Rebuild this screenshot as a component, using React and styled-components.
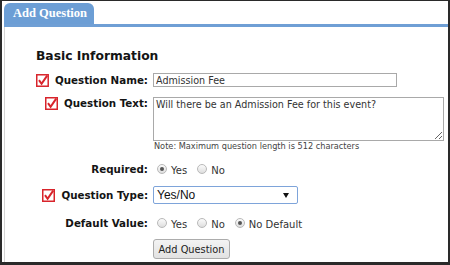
import React from 'react'
import styled, { createGlobalStyle } from 'styled-components'

const GlobalStyle = createGlobalStyle`
  html, body {
    margin: 0;
    padding: 0;
    background: #fff;
  }
  * {
    box-sizing: border-box;
  }
`

const Frame = styled.div`
  width: 450px;
  height: 265px;
  border-style: solid;
  border-color: #2a2a2a;
  border-width: 1px 2px 3px 2px;
  padding: 2px 0 0 2px;
  display: flex;
  flex-direction: column;
  overflow: hidden;
`

const TabBar = styled.div`
  display: flex;
  border-bottom: 3px solid #6f9fd5;
`

const Tab = styled.div`
  width: 90px;
  height: 21px;
  line-height: 21px;
  padding-left: 9px;
  background: #6c9ed5;
  border-radius: 6px 6px 0 0;
  color: #fff;
  font-family: 'Liberation Serif', serif;
  font-weight: bold;
  font-size: 12.5px;
`

const Panel = styled.div`
  flex: 1;
  border-left: 1px solid #d4d4d4;
  padding: 22px 0 0 31px;
`

const Heading = styled.div`
  font-family: 'DejaVu Sans', Verdana, sans-serif;
  font-weight: bold;
  font-size: 12.3px;
  line-height: 15px;
  color: #141414;
`

const Row = styled.div`
  display: grid;
  grid-template-columns: 112px auto;
  column-gap: 5px;
  align-items: ${p => (p.$top ? 'start' : 'center')};
  margin-top: ${p => p.$gap || 0}px;
  min-height: ${p => p.$height || 0}px;
`

const Label = styled.div`
  display: flex;
  justify-content: flex-end;
  align-items: center;
  gap: 6px;
  font-family: 'DejaVu Sans', Verdana, sans-serif;
  font-weight: bold;
  font-size: 10.3px;
  line-height: 13px;
  color: #141414;
  white-space: nowrap;
`

const TextInput = styled.input`
  width: 244px;
  height: 14px;
  border: 1px solid #a9a9a9;
  padding: 0 2px;
  font-family: 'DejaVu Sans', Verdana, sans-serif;
  font-size: 9.6px;
  color: #333;
  outline: none;
`

const TextArea = styled.textarea`
  display: block;
  width: 291px;
  height: 44px;
  border: 1px solid #a9a9a9;
  padding: 1px 2px;
  margin: 0;
  font-family: 'DejaVu Sans', Verdana, sans-serif;
  font-size: 9.6px;
  color: #333;
  outline: none;
`

const Note = styled.div`
  font-family: 'DejaVu Sans', Verdana, sans-serif;
  font-size: 8.2px;
  line-height: 10px;
  color: #444;
  padding-left: 1px;
`

const Options = styled.div`
  display: flex;
  align-items: center;
  padding-left: 4px;
`

const Option = styled.div`
  display: flex;
  align-items: center;
  gap: 4px;
  margin-right: 10px;
  font-family: 'DejaVu Sans', Verdana, sans-serif;
  font-size: 10px;
  color: #333;
`

const OptionText = styled.span`
  padding-top: 2px;
`

const Radio = styled.span`
  width: 10px;
  height: 10px;
  border-radius: 50%;
  border: 1px solid #b9b9b9;
  background: linear-gradient(#fbfbfb, #dedede);
  display: flex;
  align-items: center;
  justify-content: center;

  &::after {
    content: '';
    width: 4px;
    height: 4px;
    border-radius: 50%;
    background: ${p => (p.$checked ? '#555' : 'transparent')};
  }
`

const Select = styled.div`
  width: 145px;
  height: 18px;
  border: 1px solid #7ea4da;
  border-radius: 2px;
  display: flex;
  align-items: center;
  justify-content: space-between;
  padding: 0 8px 0 3px;
  font-family: 'Liberation Sans', Arial, sans-serif;
  font-size: 12px;
  color: #111;
`

const Arrow = styled.span`
  width: 0;
  height: 0;
  border-left: 3px solid transparent;
  border-right: 3px solid transparent;
  border-top: 5px solid #111;
`

const Button = styled.button`
  width: 77px;
  height: 20px;
  padding: 0;
  border: 1px solid #acacac;
  border-radius: 3px;
  background: linear-gradient(#f3f3f3, #e2e2e2);
  font-family: 'DejaVu Sans', Verdana, sans-serif;
  font-size: 9.8px;
  color: #222;
`

const Checked = () => (
  <svg width="13" height="13" viewBox="0 0 13 13">
    <rect x="0.75" y="0.75" width="11.5" height="11.5" fill="#fff" stroke="#d8242b" strokeWidth="1.5" />
    <path d="M3 6.2 L5.6 9.8 L11.2 1.6" fill="none" stroke="#d8242b" strokeWidth="2" />
  </svg>
)

const RadioGroup = ({ options, value }) => (
  <Options>
    {options.map(o => (
      <Option key={o}>
        <Radio $checked={o === value} />
        <OptionText>{o}</OptionText>
      </Option>
    ))}
  </Options>
)

export default function App() {
  return (
    <Frame>
      <GlobalStyle />
      <TabBar>
        <Tab>Add Question</Tab>
      </TabBar>
      <Panel>
        <Heading>Basic Information</Heading>
        <Row $gap={9}>
          <Label><Checked />Question Name:</Label>
          <TextInput readOnly defaultValue="Admission Fee" />
        </Row>
        <Row $gap={10} $top>
          <Label><Checked />Question Text:</Label>
          <div>
            <TextArea readOnly defaultValue="Will there be an Admission Fee for this event?" />
            <Note>Note: Maximum question length is 512 characters</Note>
          </div>
        </Row>
        <Row $gap={11} $height={14}>
          <Label>Required:</Label>
          <RadioGroup options={['Yes', 'No']} value="Yes" />
        </Row>
        <Row $gap={10}>
          <Label><Checked />Question Type:</Label>
          <Select>Yes/No<Arrow /></Select>
        </Row>
        <Row $gap={12} $height={14}>
          <Label>Default Value:</Label>
          <RadioGroup options={['Yes', 'No', 'No Default']} value="No Default" />
        </Row>
        <Row $gap={9}>
          <span />
          <Button>Add Question</Button>
        </Row>
      </Panel>
    </Frame>
  )
}
